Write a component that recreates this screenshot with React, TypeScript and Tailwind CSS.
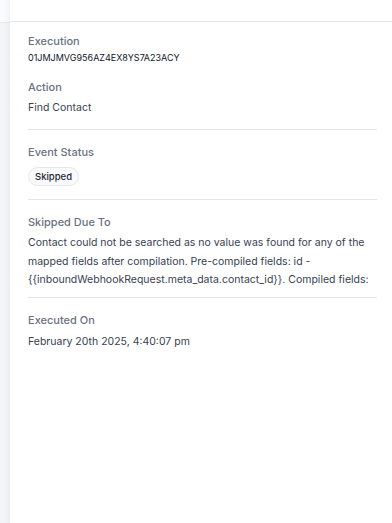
import React from "react";

const fields = [
  { label: "Execution", value: "01JMJMVG956AZ4EX8YS7A23ACY", mono: true },
  { label: "Action", value: "Find Contact" },
];

export default function App() {
  return (
    <div className="flex h-[523px] w-[392px] overflow-hidden bg-white" style={{ fontFamily: "Inter, 'Noto Sans', sans-serif" }}>
      {/* strip of the page behind the drawer */}
      <div className="flex w-[10px] shrink-0 flex-col bg-[#f3f4f6]">
        <div className="h-[23px] border-b border-[#e5e7eb] bg-[#f9fafb]" />
      </div>

      <div className="flex flex-1 flex-col bg-white shadow-[-2px_0_4px_rgba(0,0,0,0.04)]">
        <div className="h-[22px] shrink-0 border-b border-[#e5e7eb]" />

        <div className="flex flex-col px-[18px] pr-[15px] pt-[11px]">
          {fields.map((f) => (
            <div key={f.label} className="flex flex-col">
              <div className="text-[11px] font-medium leading-[16px] text-[#6b7280]">{f.label}</div>
              <div className={f.mono ? "mt-[2px] text-[9px] leading-[14px] text-[#111827]" : "mt-[3px] text-[10.5px] leading-[20px] text-[#374151]"}>
                {f.value}
              </div>
              {f.mono && <div className="h-[14px]" />}
            </div>
          ))}

          <div className="mt-[11px] border-t border-[#e5e7eb]" />

          <div className="mt-[14px] text-[11px] font-medium leading-[16px] text-[#6b7280]">Event Status</div>
          <div className="mt-[7px] flex">
            <span className="rounded-full border border-[#e5e7eb] bg-[#f9fafb] px-[6px] py-[2px] text-[9.5px] font-medium leading-[13px] text-[#1f2937]">
              Skipped
            </span>
          </div>

          <div className="mt-[13px] border-t border-[#e5e7eb]" />

          <div className="mt-[14px] text-[11px] font-medium leading-[16px] text-[#6b7280]">Skipped Due To</div>
          <p className="mt-[4px] text-[10.5px] leading-[18.5px] text-[#374151]">
            Contact could not be searched as no value was found for any of the mapped fields after compilation. Pre-compiled fields: id - {"{{inboundWebhookRequest.meta_data.contact_id}}"}. Compiled fields:
          </p>

          <div className="mt-[7px] border-t border-[#e5e7eb]" />

          <div className="mt-[14px] text-[11px] font-medium leading-[16px] text-[#6b7280]">Executed On</div>
          <div className="mt-[4px] text-[10.5px] leading-[20px] text-[#374151]">February 20th 2025, 4:40:07 pm</div>
        </div>
      </div>
    </div>
  );
}
